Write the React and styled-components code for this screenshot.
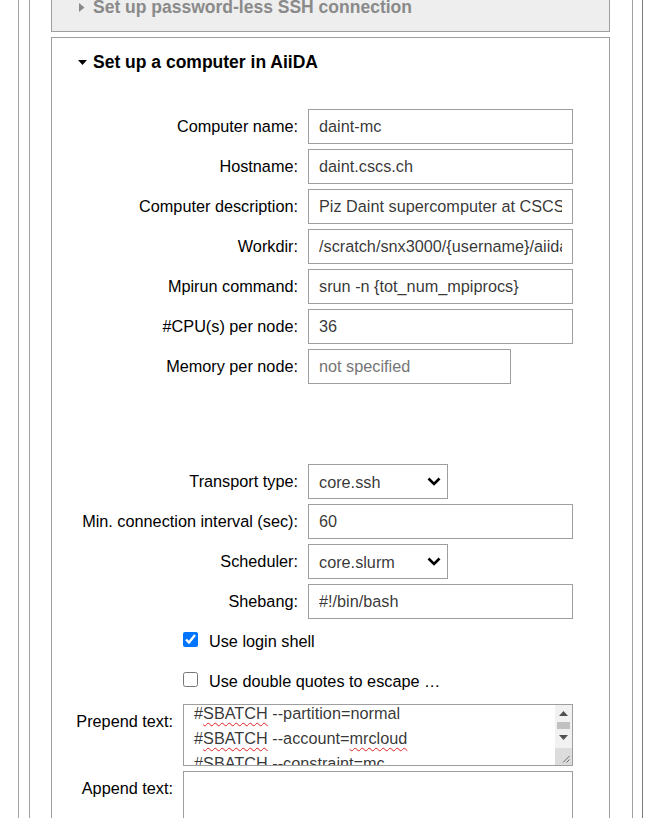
import React from "react";
import styled, { createGlobalStyle } from "styled-components";

const GlobalStyle = createGlobalStyle`
  body {
    margin: 0;
    background: #ffffff;
    font-family: "Liberation Sans", Arial, sans-serif;
    overflow: hidden;
  }
`;

const mainRows = [
  { label: "Computer name:", value: "daint-mc" },
  { label: "Hostname:", value: "daint.cscs.ch" },
  { label: "Computer description:", value: "Piz Daint supercomputer at CSCS" },
  { label: "Workdir:", value: "/scratch/snx3000/{username}/aiida_run/" },
  { label: "Mpirun command:", value: "srun -n {tot_num_mpiprocs}" },
  { label: "#CPU(s) per node:", value: "36" },
  { label: "Memory per node:", value: "", placeholder: "not specified", width: 203 },
];

const Triangle = ({ open }) =>
  open ? (
    <svg width="9" height="9" viewBox="0 0 9 9">
      <polygon points="0,2 9,2 4.5,7" fill="#000" />
    </svg>
  ) : (
    <svg width="9" height="11" viewBox="0 0 9 11">
      <polygon points="1,1 6.5,5.5 1,10" fill="#8a8a8a" />
    </svg>
  );

const Chevron = () => (
  <svg width="14" height="9" viewBox="0 0 14 9">
    <polyline points="1.5,1.5 7,7 12.5,1.5" fill="none" stroke="#000" strokeWidth="2.6" />
  </svg>
);

const Dropdown = ({ value }) => (
  <SelectWrap>
    <Select defaultValue={value}>
      <option>{value}</option>
    </Select>
    <ChevronSpot>
      <Chevron />
    </ChevronSpot>
  </SelectWrap>
);

const App = () => {
  return (
    <>
      <GlobalStyle />
      <Cell>
        <CellInner>
          <Panel $muted>
            <Header $muted>
              <Triangle />
              <span>Set up password-less SSH connection</span>
            </Header>
          </Panel>

          <Panel>
            <Header>
              <Triangle open />
              <span>Set up a computer in AiiDA</span>
            </Header>
            <Body>
              {mainRows.map((r) => (
                <Row key={r.label}>
                  <Label $w={256}>{r.label}</Label>
                  <TextInput
                    $w={r.width || 265}
                    defaultValue={r.value}
                    placeholder={r.placeholder}
                  />
                </Row>
              ))}

              <Spacer />

              <Row>
                <Label $w={256}>Transport type:</Label>
                <Dropdown value="core.ssh" />
              </Row>
              <Row>
                <Label $w={256}>Min. connection interval (sec):</Label>
                <TextInput $w={265} defaultValue="60" />
              </Row>
              <Row>
                <Label $w={256}>Scheduler:</Label>
                <Dropdown value="core.slurm" />
              </Row>
              <Row>
                <Label $w={256}>Shebang:</Label>
                <TextInput $w={265} defaultValue="#!/bin/bash" />
              </Row>

              <CheckRow>
                <CheckBox type="checkbox" defaultChecked />
                <CheckText>Use login shell</CheckText>
              </CheckRow>
              <CheckRow>
                <CheckBox type="checkbox" />
                <CheckText>Use double quotes to escape …</CheckText>
              </CheckRow>

              <Row>
                <Label $w={131}>Prepend text:</Label>
                <FakeArea>
                  <AreaText>
                    <AreaScroll>
                      <div>
                        #<Misspelt>SBATCH</Misspelt> --partition=normal
                      </div>
                      <div>
                        #<Misspelt>SBATCH</Misspelt> --account=<Misspelt>mrcloud</Misspelt>
                      </div>
                      <div>
                        #<Misspelt>SBATCH</Misspelt> --constraint=mc
                      </div>
                    </AreaScroll>
                  </AreaText>
                  <ScrollBar>
                    <ScrollButton>
                      <svg width="9" height="5" viewBox="0 0 9 5">
                        <polygon points="0,5 9,5 4.5,0" fill="#505050" />
                      </svg>
                    </ScrollButton>
                    <Thumb />
                    <ScrollButton>
                      <svg width="9" height="5" viewBox="0 0 9 5">
                        <polygon points="0,0 9,0 4.5,5" fill="#505050" />
                      </svg>
                    </ScrollButton>
                    <Track />
                    <Resizer>
                      <svg width="8" height="8" viewBox="0 0 8 8">
                        <line x1="1" y1="7.5" x2="7.5" y2="1" stroke="#6a6a6a" strokeWidth="1" />
                        <line x1="4.5" y1="7.5" x2="7.5" y2="4.5" stroke="#6a6a6a" strokeWidth="1" />
                      </svg>
                    </Resizer>
                  </ScrollBar>
                </FakeArea>
              </Row>
              <Row>
                <Label $w={131}>Append text:</Label>
                <TextArea />
              </Row>
            </Body>
          </Panel>
        </CellInner>
      </Cell>
    </>
  );
};

const Cell = styled.div`
  margin-left: 18px;
  width: 625px;
  min-height: 100vh;
  box-sizing: border-box;
  border-left: 1px solid #a4a4a4;
  border-right: 1px solid #7b7b7b;
  padding: 0 9px 0 10px;
`;

const CellInner = styled.div`
  min-height: 100vh;
  display: flex;
  flex-direction: column;
  border-left: 1px solid #a0a0a0;
  border-right: 1px solid #a0a0a0;
  padding: 0 22px 0 21px;
`;

const Panel = styled.div`
  border: 1px solid #9e9e9e;
  background: ${(p) => (p.$muted ? "#eeeeee" : "#ffffff")};
  margin-top: ${(p) => (p.$muted ? "-18px" : "5px")};
`;

const Header = styled.div`
  display: flex;
  align-items: center;
  gap: 6px;
  padding: 13px 0 13px 26px;
  font-size: 17.5px;
  font-weight: bold;
  line-height: 22px;
  color: ${(p) => (p.$muted ? "#8a8a8a" : "#000000")};
`;

const Body = styled.div`
  display: flex;
  flex-direction: column;
  gap: 5px;
  padding: 23px 0 60px;
`;

const Row = styled.div`
  display: flex;
  align-items: flex-start;
`;

const Label = styled.div`
  width: ${(p) => p.$w}px;
  flex-shrink: 0;
  box-sizing: border-box;
  padding-right: 10px;
  text-align: right;
  font-size: 16.25px;
  line-height: 35px;
  color: #000;
  white-space: nowrap;
`;

const TextInput = styled.input`
  width: ${(p) => p.$w}px;
  height: 35px;
  box-sizing: border-box;
  margin: 0;
  border: 1px solid #9e9e9e;
  border-radius: 0;
  padding: 0 10px;
  font-family: "Liberation Sans", Arial, sans-serif;
  font-size: 16.25px;
  color: rgba(0, 0, 0, 0.8);
  outline: none;

  &::placeholder {
    color: #757575;
  }
`;

const Spacer = styled.div`
  height: 70px;
`;

const SelectWrap = styled.div`
  position: relative;
  width: 140px;
  height: 35px;
`;

const Select = styled.select`
  appearance: none;
  width: 100%;
  height: 100%;
  box-sizing: border-box;
  margin: 0;
  border: 1px solid #9e9e9e;
  border-radius: 0;
  background: #fff;
  padding: 0 10px;
  font-family: "Liberation Sans", Arial, sans-serif;
  font-size: 16.25px;
  color: rgba(0, 0, 0, 0.8);
  outline: none;
`;

const ChevronSpot = styled.span`
  position: absolute;
  right: 7px;
  top: 13px;
  display: flex;
  pointer-events: none;
`;

const CheckRow = styled.div`
  display: flex;
  align-items: center;
  height: 35px;
  margin-left: 131px;
`;

const CheckBox = styled.input`
  width: 15px;
  height: 15px;
  margin: -4px 0 0;
  accent-color: #0075ff;
`;

const CheckText = styled.span`
  margin-left: 11px;
  font-size: 16.25px;
  color: #000;
`;

const FakeArea = styled.div`
  width: 390px;
  height: 62px;
  box-sizing: border-box;
  border: 1px solid #9e9e9e;
  display: flex;
`;

const AreaText = styled.div`
  flex: 1;
  overflow: hidden;
  padding-left: 10px;
  font-size: 16.25px;
  line-height: 25px;
  color: rgba(0, 0, 0, 0.8);
  white-space: nowrap;
`;

const AreaScroll = styled.div`
  margin-top: -4px;
`;

const Misspelt = styled.span`
  text-decoration: underline wavy #e02020;
  text-decoration-thickness: 1px;
  text-underline-offset: 3px;
  text-decoration-skip-ink: none;
`;

const ScrollBar = styled.div`
  width: 17px;
  display: flex;
  flex-direction: column;
  background: #f1f1f1;
`;

const ScrollButton = styled.div`
  height: 17px;
  display: flex;
  align-items: center;
  justify-content: center;
`;

const Thumb = styled.div`
  height: 7px;
  margin: 0 2px;
  background: #c1c1c1;
`;

const Track = styled.div`
  flex: 1;
`;

const Resizer = styled.div`
  height: 17px;
  background: #dcdcdc;
  display: flex;
  align-items: flex-end;
  justify-content: flex-end;
  padding: 0 2px 2px 0;
  box-sizing: border-box;
`;

const TextArea = styled.textarea`
  width: 390px;
  height: 62px;
  box-sizing: border-box;
  margin: 0;
  border: 1px solid #9e9e9e;
  border-radius: 0;
  resize: none;
  outline: none;
`;

export default App;
